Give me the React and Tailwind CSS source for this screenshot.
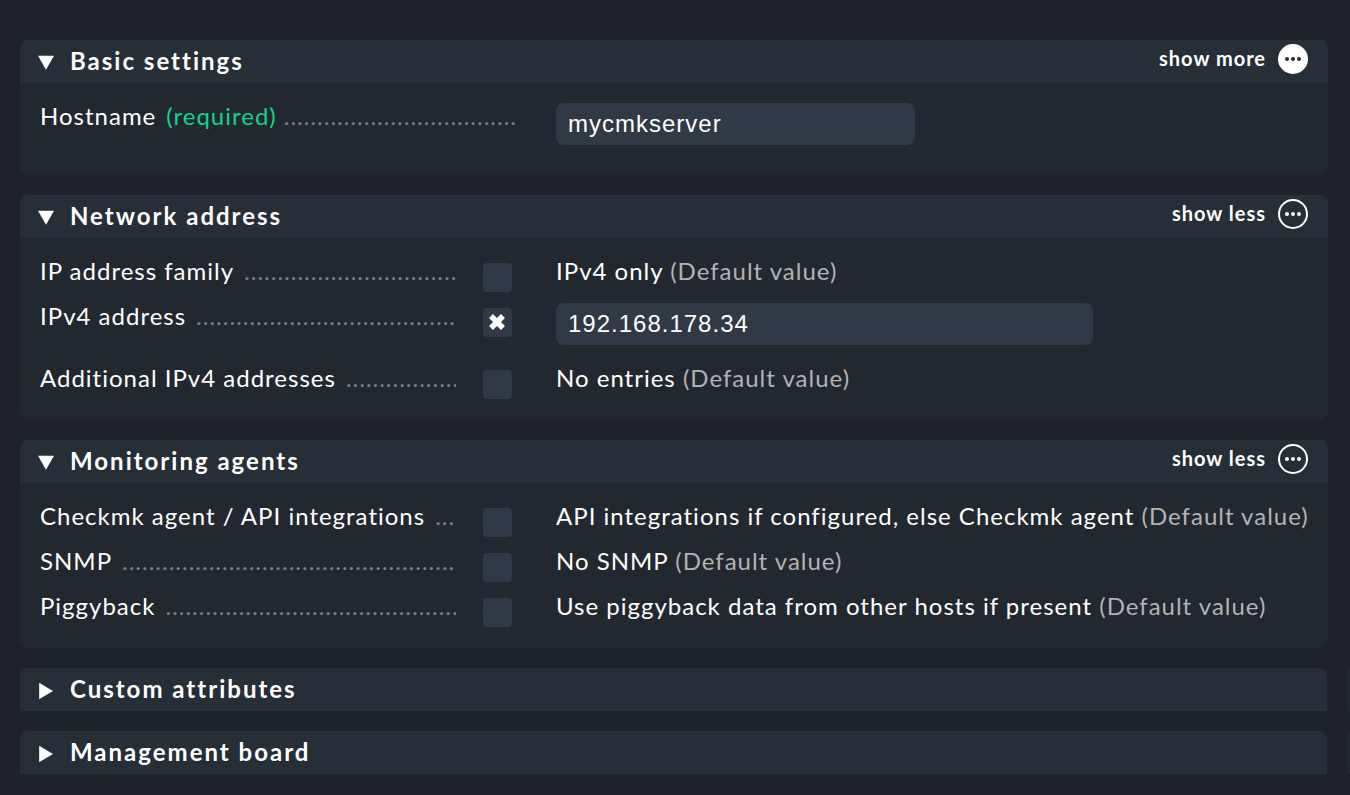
function Triangle({ open }) {
  return (
    <svg className="mt-[15px] h-4 w-4 shrink-0" viewBox="0 0 16 16" fill="#fff">
      <path d={open ? "M0 0.8H16L8 14.8Z" : "M1.2 -0.2V16.2L15 8Z"} />
    </svg>
  );
}

function MoreToggle({ filled }) {
  const dot = filled ? "#262e37" : "#fff";
  return (
    <div className="mt-1 flex items-start gap-3">
      <span className="-mt-px text-[20px] leading-[30px] font-bold tracking-[1px]">
        {filled ? "show more" : "show less"}
      </span>
      <svg className="h-[30px] w-[30px]" viewBox="0 0 30 30">
        <circle cx="15" cy="15" r="14" fill={filled ? "#fff" : "none"} stroke="#fff" strokeWidth="2" />
        <circle cx="9" cy="15" r="2" fill={dot} />
        <circle cx="15" cy="15" r="2" fill={dot} />
        <circle cx="21" cy="15" r="2" fill={dot} />
      </svg>
    </div>
  );
}

function Header({ title, open, toggle }) {
  return (
    <div className="flex h-[43px] w-full items-start rounded-t-[8px] bg-[#262e37] pl-[18px] pr-5">
      <Triangle open={open} />
      <h2 className="ml-4 flex-1 text-[24px] leading-[41px] font-bold tracking-[2px]">{title}</h2>
      {toggle && <MoreToggle filled={toggle === "more"} />}
    </div>
  );
}

function Section({ title, toggle, height, children }) {
  return (
    <section className={`${height} w-[1308px] rounded-[8px] bg-[#22282f]`}>
      <Header title={title} open toggle={toggle} />
      <div className="pl-5 pt-5">{children}</div>
    </section>
  );
}

function CollapsedSection({ title }) {
  return (
    <div className="flex justify-between">
      <div className="w-[1307px]">
        <Header title={title} />
      </div>
      <div className="w-px bg-[#262e37]" />
    </div>
  );
}

function Label({ text, required, width, dots }) {
  return (
    <div className={`${width} -mt-0.5 flex h-[31px] shrink-0 overflow-hidden whitespace-pre`}>
      <span>{text}</span>
      {required && <span className="ml-2.5 text-[#13d389]">(required)</span>}
      <span className={`${required ? "ml-[7px]" : "ml-2.5"} text-[#7d7f80]`}>{".".repeat(dots)}</span>
    </div>
  );
}

function Field({ value, width }) {
  return (
    <input
      defaultValue={value}
      className={`${width} h-[42px] rounded-[8px] bg-[#303946] px-3 font-['Liberation_Sans',sans-serif] text-[24px] tracking-[1px] text-white outline-none`}
    />
  );
}

function Row({ label, dots, height, checked, value, input }) {
  return (
    <div className={`${height} flex`}>
      <Label text={label} width="w-[416px]" dots={dots} />
      <div className="ml-[27px] mr-[44px] mt-[5px] h-[29px] w-[29px] shrink-0 rounded-[4px] bg-[#303946] p-1.5">
        {checked && (
          <svg className="h-4 w-4" viewBox="0 0 16 16" stroke="#fff" strokeWidth="5.6">
            <path d="M2 2L14 14M14 2L2 14" />
          </svg>
        )}
      </div>
      {input ? (
        <Field value={input} width="w-[537px]" />
      ) : (
        <div className="-mt-0.5 whitespace-pre">
          {value} <span className="text-[#b3b3b3]">(Default value)</span>
        </div>
      )}
    </div>
  );
}

export default function App() {
  return (
    <main className="flex h-[795px] w-[1350px] flex-col gap-5 overflow-hidden bg-[#1e2229] pl-5 pt-10 font-[Lato,sans-serif] text-[24px] leading-[29px] tracking-[1px] text-white">
      <Section title="Basic settings" toggle="more" height="h-[135px]">
        <div className="flex gap-10">
          <Label text="Hostname" required width="w-[476px]" dots={35} />
          <Field value="mycmkserver" width="w-[359px]" />
        </div>
      </Section>
      <Section title="Network address" toggle="less" height="h-[225px]">
        <Row label="IP address family" dots={32} height="h-[45px]" value="IPv4 only" />
        <Row label="IPv4 address" dots={39} height="h-[62px]" checked input="192.168.178.34" />
        <Row label="Additional IPv4 addresses" dots={17} height="h-[45px]" value="No entries" />
      </Section>
      <Section title="Monitoring agents" toggle="less" height="h-[208px]">
        <Row
          label="Checkmk agent / API integrations"
          dots={3}
          height="h-[45px]"
          value="API integrations if configured, else Checkmk agent"
        />
        <Row label="SNMP" dots={50} height="h-[45px]" value="No SNMP" />
        <Row label="Piggyback" dots={44} height="h-[45px]" value="Use piggyback data from other hosts if present" />
      </Section>
      <CollapsedSection title="Custom attributes" />
      <CollapsedSection title="Management board" />
    </main>
  );
}
